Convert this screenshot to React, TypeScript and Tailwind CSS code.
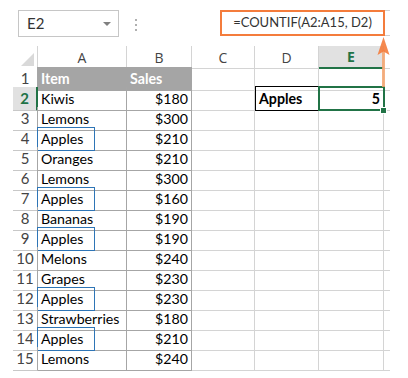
import React from 'react';

const rows: [string, string, boolean][] = [
  ['Kiwis', '$180', false],
  ['Lemons', '$300', false],
  ['Apples', '$210', true],
  ['Oranges', '$210', false],
  ['Lemons', '$300', false],
  ['Apples', '$160', true],
  ['Bananas', '$190', false],
  ['Apples', '$190', true],
  ['Melons', '$240', false],
  ['Grapes', '$230', false],
  ['Apples', '$230', true],
  ['Strawberries', '$180', false],
  ['Apples', '$210', true],
  ['Lemons', '$240', false],
];

const cols = 'grid grid-cols-[25px_89px_65px_63px_64px_65px_6px] h-[20px]';

const App: React.FC = () => {
  return (
    <div className="relative w-[408px] h-[378px] bg-white overflow-hidden font-['Lato',sans-serif] text-[14.2px] text-black">
      {/* formula bar */}
      <div className="flex items-start pt-[10px] pl-[18px]">
        <div className="flex items-center justify-between w-[101px] h-[27px] border border-[#c6c6c6] pl-[8px] pr-[7px] text-[#333] text-[15px]">
          <span>E2</span>
          <span className="w-0 h-0 border-x-[4px] border-x-transparent border-t-[4px] border-t-[#808080]" />
        </div>
        <div className="flex flex-col gap-[3px] ml-[16px] mt-[9px]">
          <span className="w-[2px] h-[2px] bg-[#b0b0b0]" />
          <span className="w-[2px] h-[2px] bg-[#b0b0b0]" />
          <span className="w-[2px] h-[2px] bg-[#b0b0b0]" />
        </div>
        <div className="ml-[83px] flex">
          <div className="w-[165px] h-[26px] border-2 border-[#f47c3c] flex items-center justify-center text-[#333] text-[13px]">
            =COUNTIF(A2:A15, D2)
          </div>
          <div className="w-[5px] h-[26px] border-y border-[#d0d0d0]" />
        </div>
      </div>

      {/* column headers */}
      <div className={`${cols} h-[21px] mt-[9px] ml-[13px] text-[14px] text-[#444] font-['Open_Sans',sans-serif]`}>
        <div className="flex items-end justify-end pr-[3px] pb-[3px] border-r border-[#d4d4d4]">
          <span className="w-0 h-0 border-l-[13px] border-l-transparent border-b-[13px] border-b-[#d9d9d9]" />
        </div>
        <div className="flex items-center justify-center border-r border-[#d4d4d4]">A</div>
        <div className="flex items-center justify-center border-r border-[#d4d4d4]">B</div>
        <div className="flex items-center justify-center border-r border-b border-[#d4d4d4]">C</div>
        <div className="flex items-center justify-center border-r border-b border-[#d4d4d4]">D</div>
        <div className="flex items-center justify-center bg-[#e1e1e1] border-r border-r-[#d4d4d4] border-b-2 border-b-[#217346] font-bold text-[#217346]">E</div>
        <div className="border-b border-[#d4d4d4]" />
      </div>

      {/* row 1 */}
      <div className={`${cols} ml-[13px]`}>
        <div className="flex items-center justify-center border-r border-r-[#a6a6a6] border-b border-b-[#c8c8c8] text-[#444] text-[15px]">1</div>
        <div className="flex items-center pl-[3px] bg-[#a5a5a5] border-b border-r border-[#a5a5a5] text-white font-bold">Item</div>
        <div className="flex items-center pl-[3px] bg-[#a5a5a5] border-b border-r border-[#a5a5a5] text-white font-bold">Sales</div>
        <div className="border-r border-b border-[#d4d4d4]" />
        <div className="border-r border-b border-[#d4d4d4]" />
        <div className="border-r border-b border-[#d4d4d4]" />
        <div className="border-b border-[#d4d4d4]" />
      </div>

      {rows.map(([item, sales, hit], i) => {
        const n = i + 2;
        const sel = n === 2;
        return (
          <div key={n} className={`${cols} ml-[13px]`}>
            <div
              className={
                sel
                  ? 'flex items-center justify-center bg-[#e1e1e1] border-r-2 border-r-[#217346] border-b border-b-[#c8c8c8] font-bold text-[#217346] text-[15px]'
                  : 'flex items-center justify-center border-r border-r-[#a6a6a6] border-b border-b-[#c8c8c8] text-[#444] text-[15px]'
              }
            >
              {n}
            </div>
            <div className="flex items-stretch border-r border-b border-[#a6a6a6]">
              {hit ? (
                <span className="flex items-center w-[58px] -mb-px -ml-px pl-[3px] border border-[#2e75b6]">{item}</span>
              ) : (
                <span className="flex items-center pl-[3px]">{item}</span>
              )}
            </div>
            <div className="flex items-center justify-end pr-[3px] border-r border-b border-[#a6a6a6]">{sales}</div>
            <div className="border-r border-b border-[#d4d4d4]" />
            {sel ? (
              <div className="flex items-center pl-[3px] border border-black -mt-px font-bold">Apples</div>
            ) : (
              <div className="border-r border-b border-[#d4d4d4]" />
            )}
            {sel ? (
              <div className="relative flex items-center justify-end pr-[4px] font-bold">
                <div className="absolute left-[-1px] top-[-1px] right-[-1px] bottom-0 border-2 border-[#217346]" />
                <span className="relative">5</span>
                <div className="absolute right-[-3px] bottom-[-3px] w-[5px] h-[5px] bg-[#217346] border border-white box-content" />
              </div>
            ) : (
              <div className="border-r border-b border-[#d4d4d4]" />
            )}
            <div className="border-b border-[#d4d4d4]" />
          </div>
        );
      })}

      {/* arrow from formula to E2 */}
      <svg className="absolute left-[376px] top-[36px]" width="16" height="52" viewBox="0 0 16 52">
        <rect x="6" y="14" width="3" height="37" fill="#f4a46e" opacity="0.85" />
        <path d="M7.5 1 L13.5 19 L7.5 15.5 L1.5 19 Z" fill="#f47c3c" opacity="0.9" />
      </svg>
    </div>
  );
};

export default App;
